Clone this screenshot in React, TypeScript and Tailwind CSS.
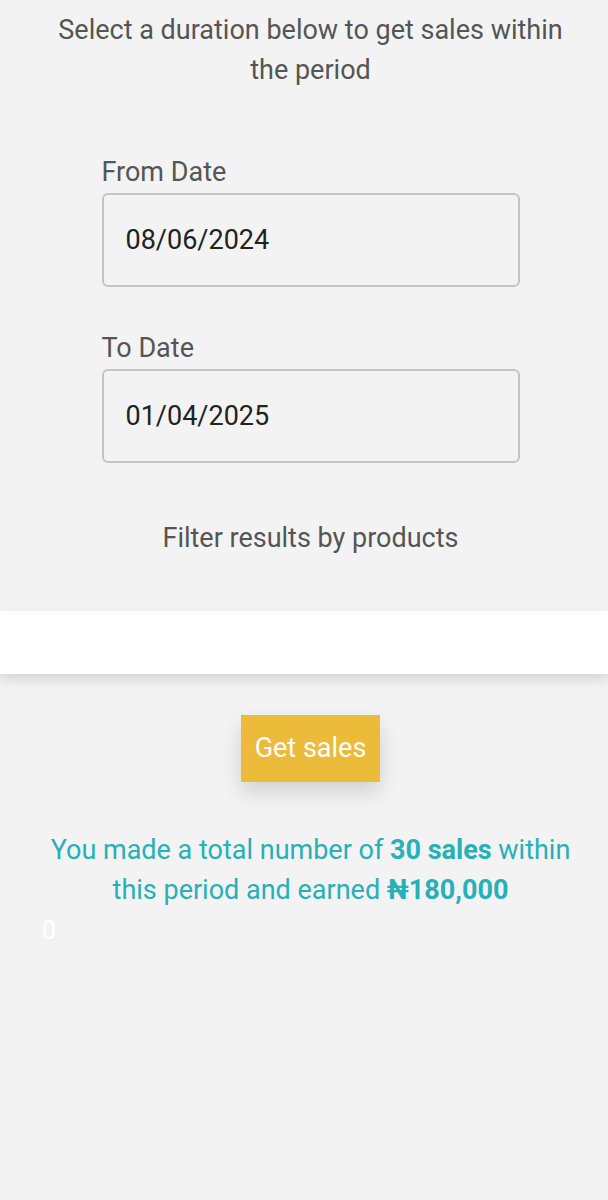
import React from "react";

export default function App() {
  return (
    <div
      className="min-h-[1200px] w-full bg-[#f3f3f3] flex flex-col"
      style={{ fontFamily: "Roboto, 'Noto Sans', sans-serif" }}
    >
      <p className="mt-[10px] ml-[13px] px-[30px] text-center text-[27px] leading-[40px] text-[#555555]">
        Select a duration below to get sales within the period
      </p>

      <div className="mt-[68px] ml-[13px] flex justify-center">
        <div className="w-[418px] flex flex-col">
          <label className="text-[27px] leading-[28px] text-[#555555]">From Date</label>
          <div className="mt-[7px] h-[94px] w-[418px] rounded-[6px] border-2 border-[#c4c4c4] flex items-center pl-[22px] text-[27px] text-[#222222]">
            08/06/2024
          </div>

          <label className="mt-[47px] text-[27px] leading-[28px] text-[#555555]">To Date</label>
          <div className="mt-[7px] h-[94px] w-[418px] rounded-[6px] border-2 border-[#c4c4c4] flex items-center pl-[22px] text-[27px] text-[#222222]">
            01/04/2025
          </div>
        </div>
      </div>

      <p className="mt-[61px] ml-[13px] text-center text-[27px] leading-[28px] text-[#555555]">
        Filter results by products
      </p>

      <div className="mt-[59px] h-[63px] w-full bg-white shadow-[0_6px_10px_rgba(0,0,0,0.12)]" />

      <div className="mt-[41px] ml-[13px] flex justify-center">
        <button className="h-[67px] w-[139px] bg-[#ecbb3a] text-white text-[27px] shadow-[0_10px_20px_rgba(0,0,0,0.14)]">
          Get sales
        </button>
      </div>

      <p className="mt-[48px] ml-[13px] px-[30px] text-center text-[27px] leading-[40px] text-[#27b0b7]">
        You made a total number of <span className="font-bold">30 sales</span> within this period and earned{" "}
        <span className="font-bold">₦180,000</span>
      </p>

      <div className="pl-[42px] text-[25px] leading-[42px] text-white">0</div>
    </div>
  );
}
